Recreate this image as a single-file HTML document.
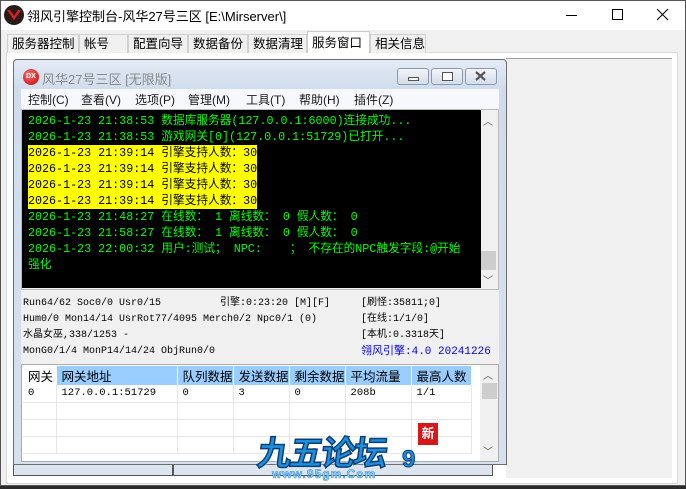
<!DOCTYPE html>
<html><head><meta charset="utf-8"><style>
*{margin:0;padding:0;box-sizing:border-box}
body{width:686px;height:489px;overflow:hidden;background:#2b2b2b;font-family:"Liberation Sans","Noto Sans CJK SC",sans-serif;font-size:12px;color:#000;position:relative}
.abs{position:absolute}
#win{left:0;top:0;width:686px;height:486px;background:#f0f0f0;border:1px solid #555}
#title{left:1px;top:1px;width:684px;height:29px;background:#fff;}
#title .t{left:26px;top:5px;font-size:13px;}
.tab{top:34px;height:19px;border:1px solid #d0d0d0;border-bottom:none;background:#f0f0f0;font-size:12.5px;padding-left:4px;line-height:18px;white-space:nowrap;overflow:hidden}
.tab.sel{top:31px;height:22px;background:#fff;border-color:#ccc}
#panel{left:6px;top:52px;width:672px;height:432px;border:1px solid #d9d9d9;background:#fff}
#inner{left:13px;top:59px;width:494px;height:406px;border:1px solid #6d6d6d;border-radius:4px 4px 0 0;background:linear-gradient(#e3ebf5,#cfdcec 30px,#d5e1ef)}
#con{left:22px;top:110px;width:459px;height:178px;background:#000;}
.ln{position:absolute;left:6px;font-size:11.7px;color:#00ff00;white-space:pre;line-height:16px;font-family:"Liberation Mono","Noto Sans CJK SC",monospace}
.yl{background:#ffff00;color:#000}
.st{position:absolute;font-size:10px;white-space:pre;font-family:"Liberation Mono","Noto Sans CJK SC",monospace;line-height:14px}
table{border-collapse:collapse}
td{border-right:1px solid #e6e6e6;border-bottom:1px solid #e6e6e6;height:17px;font-size:10.5px;padding-left:5px;white-space:nowrap;font-family:"Liberation Mono",monospace}
th{font-weight:normal;background:#99ccff;text-align:left;font-size:12.5px;padding-left:5px;height:17px;border-right:1px solid #fff;white-space:nowrap}
</style></head><body>
<div id="win" class="abs"></div>
<div id="title" class="abs">
 <div class="abs" style="left:3px;top:4px;width:20px;height:20px;border-radius:50%;background:#2a1a1a"></div>
 <svg class="abs" style="left:5px;top:8px" width="16" height="12"><path d="M1 1 L8 11 L15 1 L12 1 L8 7 L4 1Z" fill="#e02020"/></svg>
 <div class="abs t">翎风引擎控制台-风华27号三区 [E:\Mirserver\]</div>
 <svg class="abs" style="left:565px;top:14px" width="12" height="2"><rect width="11" height="1" fill="#000"/></svg>
 <svg class="abs" style="left:611px;top:8px" width="12" height="12"><rect x=".5" y=".5" width="10" height="10" fill="none" stroke="#000"/></svg>
 <svg class="abs" style="left:656px;top:8px" width="12" height="12"><path d="M0 0L11 11M11 0L0 11" stroke="#000"/></svg>
</div>
<div id="panel" class="abs"></div>
<div class="abs tab" style="left:7px;width:72px">服务器控制</div>
<div class="abs tab" style="left:79px;width:49px">帐号</div>
<div class="abs tab" style="left:128px;width:60px">配置向导</div>
<div class="abs tab" style="left:188px;width:60px">数据备份</div>
<div class="abs tab" style="left:248px;width:59px">数据清理</div>
<div class="abs tab sel" style="left:307px;width:63px;line-height:22px">服务窗口</div>
<div class="abs tab" style="left:370px;width:56px">相关信息</div>
<div class="abs" style="left:506px;top:58px;width:166px;height:1px;background:#a0a0a0"></div>
<div class="abs" style="left:506px;top:59px;width:166px;height:419px;background:#f0f0f0"></div>
<div class="abs" style="left:13px;top:462px;width:160px;height:14px;border:1px solid #555;border-top:none;background:#dbe4ef"></div>
<div class="abs" style="left:173px;top:462px;width:320px;height:14px;border:1px solid #555;border-top:none;background:#dbe4ef"></div>
<div id="inner" class="abs"></div>
<div class="abs" style="left:23px;top:69px;width:16px;height:16px;border-radius:50%;background:radial-gradient(circle at 40% 35%,#ff7070,#c00000);color:#fff;font-size:7px;font-weight:bold;line-height:16px;text-align:center">DX</div>
<div class="abs" style="left:42px;top:69px;font-size:13px;color:#8a8a8a">风华27号三区 [无限版]</div>
<div class="abs" style="left:397px;top:68px;width:32px;height:17px;border:1px solid #8b99aa;border-radius:3px;background:linear-gradient(#f2f5f9,#d4dde9)"><div class="abs" style="left:10px;top:8px;width:11px;height:4px;border:1px solid #555;background:#fff"></div></div>
<div class="abs" style="left:431px;top:68px;width:32px;height:17px;border:1px solid #8b99aa;border-radius:3px;background:linear-gradient(#f2f5f9,#d4dde9)"><div class="abs" style="left:10px;top:3px;width:11px;height:9px;border:1px solid #555;background:#fff"></div></div>
<div class="abs" style="left:465px;top:68px;width:32px;height:17px;border:1px solid #8b99aa;border-radius:3px;background:linear-gradient(#f2f5f9,#d4dde9)"><svg class="abs" style="left:9px;top:2px" width="12" height="11"><path d="M1 1L10 9M10 1L1 9" stroke="#555" stroke-width="2.2"/></svg></div>
<div class="abs" style="left:21px;top:89px;width:478px;height:20px;background:#f6f8fb"></div>
<div class="abs" style="left:28px;top:91px;font-size:12px;color:#1a1a1a">控制(C)</div>
<div class="abs" style="left:81px;top:91px;font-size:12px;color:#1a1a1a">查看(V)</div>
<div class="abs" style="left:135px;top:91px;font-size:12px;color:#1a1a1a">选项(P)</div>
<div class="abs" style="left:188px;top:91px;font-size:12px;color:#1a1a1a">管理(M)</div>
<div class="abs" style="left:246px;top:91px;font-size:12px;color:#1a1a1a">工具(T)</div>
<div class="abs" style="left:299px;top:91px;font-size:12px;color:#1a1a1a">帮助(H)</div>
<div class="abs" style="left:354px;top:91px;font-size:12px;color:#1a1a1a">插件(Z)</div>
<div class="abs" style="left:21px;top:109px;width:478px;height:181px;border:1px solid #bbb;background:#f0f0f0"></div>
<div id="con" class="abs">
<div class="ln" style="top:3px">2026-1-23 21:38:53 数据库服务器(127.0.0.1:6000)连接成功...</div>
<div class="ln" style="top:19px">2026-1-23 21:38:53 游戏网关[0](127.0.0.1:51729)已打开...</div>
<div class="ln yl" style="top:35px">2026-1-23 21:39:14 引擎支持人数：30</div>
<div class="ln yl" style="top:51px">2026-1-23 21:39:14 引擎支持人数：30</div>
<div class="ln yl" style="top:67px">2026-1-23 21:39:14 引擎支持人数：30</div>
<div class="ln yl" style="top:83px">2026-1-23 21:39:14 引擎支持人数：30</div>
<div class="ln" style="top:99px">2026-1-23 21:48:27 在线数： 1 离线数： 0 假人数： 0</div>
<div class="ln" style="top:115px">2026-1-23 21:58:27 在线数： 1 离线数： 0 假人数： 0</div>
<div class="ln" style="top:131px">2026-1-23 22:00:32 用户:测试； NPC:    ； 不存在的NPC触发字段:@开始</div>
<div class="ln" style="top:147px">强化</div>
</div>
<div class="abs" style="left:481px;top:110px;width:17px;height:178px;background:#f0f0f0"></div>
<div class="abs" style="left:483px;top:113px;font-size:10px;color:#555">︿</div>
<div class="abs" style="left:481px;top:251px;width:15px;height:19px;background:#cdcdcd"></div>
<div class="abs" style="left:483px;top:272px;font-size:10px;color:#555">﹀</div>
<div class="abs" style="left:21px;top:290px;width:478px;height:74px;background:#f0f0f0"></div>
<div class="st" style="left:23px;top:297px">Run64/62 Soc0/0 Usr0/15</div>
<div class="st" style="left:220px;top:297px">引擎:0:23:20 [M][F]</div>
<div class="st" style="left:361px;top:297px">[刷怪:35811;0]</div>
<div class="st" style="left:23px;top:313px">Hum0/0 Mon14/14 UsrRot77/4095 Merch0/2 Npc0/1 (0)</div>
<div class="st" style="left:361px;top:313px">[在线:1/1/0]</div>
<div class="st" style="left:23px;top:329px">水晶女巫,338/1253 -</div>
<div class="st" style="left:361px;top:329px">[本机:0.3318天]</div>
<div class="st" style="left:23px;top:345px">MonG0/1/4 MonP14/14/24 ObjRun0/0</div>
<div class="st" style="left:361px;top:345px;color:#0000ee;font-size:11px">翎风引擎:4.0 20241226</div>
<div class="abs" style="left:21px;top:364px;width:478px;height:98px;border:1px solid #ababab;background:#fff;overflow:hidden">
<table class="abs" style="left:1px;top:1px">
<tr><th style="background:#fff;width:33px">网关</th><th style="width:121px">网关地址</th><th style="width:56px">队列数据</th><th style="width:56px">发送数据</th><th style="width:56px">剩余数据</th><th style="width:66px">平均流量</th><th style="width:60px">最高人数</th></tr>
<tr><td>0</td><td>127.0.0.1:51729</td><td>0</td><td>3</td><td>0</td><td>208b</td><td>1/1</td></tr>
<tr><td></td><td></td><td></td><td></td><td></td><td></td><td></td></tr>
<tr><td></td><td></td><td></td><td></td><td></td><td></td><td></td></tr>
<tr><td></td><td></td><td></td><td></td><td></td><td></td><td></td></tr>
</table>
<div class="abs" style="left:458px;top:0;width:18px;height:96px;background:#f0f0f0"></div>
<div class="abs" style="left:461px;top:2px;font-size:10px;color:#555">︿</div>
<div class="abs" style="left:460px;top:18px;width:15px;height:16px;background:#cdcdcd"></div>
<div class="abs" style="left:461px;top:78px;font-size:10px;color:#555">﹀</div>
</div>
<div class="abs" style="left:418px;top:423px;width:20px;height:22px;background:#d81818;color:#fff;font-size:13px;font-weight:bold;text-align:center;line-height:22px">新</div>
<div class="abs" style="left:258px;top:426px;font-size:34px;font-weight:bold;color:#1f8fd8;letter-spacing:-2px;transform:skewX(-8deg);-webkit-text-stroke:1.5px #0a3f7a;text-shadow:0 0 2px #fff,0 0 3px #fff">九五论坛</div>
<div class="abs" style="left:402px;top:446px;font-size:24px;font-weight:bold;color:#1f8fd8;-webkit-text-stroke:1px #0a3f7a">9</div>
<div class="abs" style="left:272px;top:467px;font-size:12px;font-weight:bold;color:#9fdcff;-webkit-text-stroke:0.6px #3a8fd0;letter-spacing:1px">www.95gm.Com</div>
</body></html>
